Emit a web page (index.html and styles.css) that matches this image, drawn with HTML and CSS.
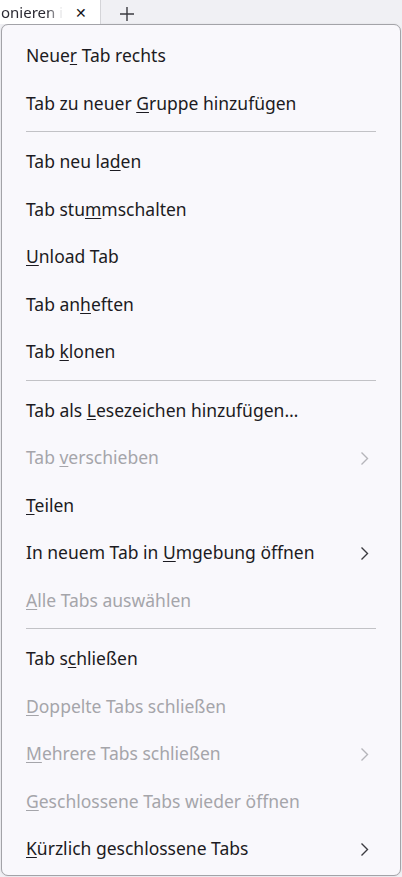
FILE: index.html
```html
<!DOCTYPE HTML>
<html>
<head>
<meta charset="utf-8">
<title>Tab-Kontextmenü</title>
<link rel="stylesheet" href="styles.css">
</head>

<body>
<div class="tabstrip">
	<div class="tab">
		<span class="tab-title">onieren i</span>
		<span class="tab-close">&#x2715;</span>
	</div>
	<span class="new-tab">
		<svg width="16" height="16" viewBox="0 0 16 16"><path d="M8 1v14M1 8h14" stroke="#3b3b40" stroke-width="1.4" fill="none"/></svg>
	</span>
</div>

<div class="menu">
	<div class="item">Neue<u>r</u> Tab rechts</div>
	<div class="item">Tab zu neuer <u>G</u>ruppe hinzufügen</div>
	<div class="sep"></div>
	<div class="item">Tab neu la<u>d</u>en</div>
	<div class="item">Tab stu<u>m</u>mschalten</div>
	<div class="item"><u>U</u>nload Tab</div>
	<div class="item">Tab an<u>h</u>eften</div>
	<div class="item">Tab <u>k</u>lonen</div>
	<div class="sep"></div>
	<div class="item">Tab als <u>L</u>esezeichen hinzufügen…</div>
	<div class="item off">Tab <u>v</u>erschieben<svg class="chev" width="9" height="15" viewBox="0 0 9 15"><path d="M1.5 1.5l6 6-6 6" fill="none"/></svg></div>
	<div class="item"><u>T</u>eilen</div>
	<div class="item">In neuem Tab in <u>U</u>mgebung öffnen<svg class="chev" width="9" height="15" viewBox="0 0 9 15"><path d="M1.5 1.5l6 6-6 6" fill="none"/></svg></div>
	<div class="item off"><u>A</u>lle Tabs auswählen</div>
	<div class="sep"></div>
	<div class="item">Tab s<u>c</u>hließen</div>
	<div class="item off"><u>D</u>oppelte Tabs schließen</div>
	<div class="item off"><u>M</u>ehrere Tabs schließen<svg class="chev" width="9" height="15" viewBox="0 0 9 15"><path d="M1.5 1.5l6 6-6 6" fill="none"/></svg></div>
	<div class="item off"><u>G</u>eschlossene Tabs wieder öffnen</div>
	<div class="item"><u>K</u>ürzlich geschlossene Tabs<svg class="chev" width="9" height="15" viewBox="0 0 9 15"><path d="M1.5 1.5l6 6-6 6" fill="none"/></svg></div>
</div>
</body>
</html>
```

FILE: styles.css
```css
* {margin:0; padding:0; box-sizing:border-box;}
body {background:#f0f0f4; font-family:"Noto Sans", "Open Sans", sans-serif; color:#1c1b22; width:402px; height:877px; overflow:hidden;}

.tabstrip {height:24px; display:flex; align-items:center;}
.tab {width:101px; height:24px; background:#fff; border-right:1px solid #d4d4d8; display:flex; align-items:center;}
.tab-title {white-space:nowrap; font-size:15px; color:#2b2a33; margin-left:1px;
	-webkit-mask-image:linear-gradient(to right, #000 46px, transparent 100%); mask-image:linear-gradient(to right, #000 46px, transparent 100%);}
.tab-close {font-size:14px; color:#15141a; margin-left:12px;}
.new-tab {display:flex; margin-left:18px; margin-top:4px;}

.menu {margin:0 1px; height:852px; background:#f9f8fc; border:1px solid #a3a3a8; border-radius:7px; padding:7px 0 4px; box-shadow:0 0 2px rgba(0,0,0,0.1);}
.item {height:47.5px; line-height:47.5px; padding-left:24px; font-size:17.5px; white-space:nowrap; position:relative;}
.item u {text-underline-offset:2px; text-decoration-thickness:1px;}
.item.off {color:#a5a5aa;}
.chev {position:absolute; right:31px; top:17px;}
.chev path {stroke:#3b3b40; stroke-width:1.4;}
.item.off .chev path {stroke:#b5b5ba;}
.sep {height:1px; background:#c2c2c6; margin:4px 24px 6px 24px;}
```
